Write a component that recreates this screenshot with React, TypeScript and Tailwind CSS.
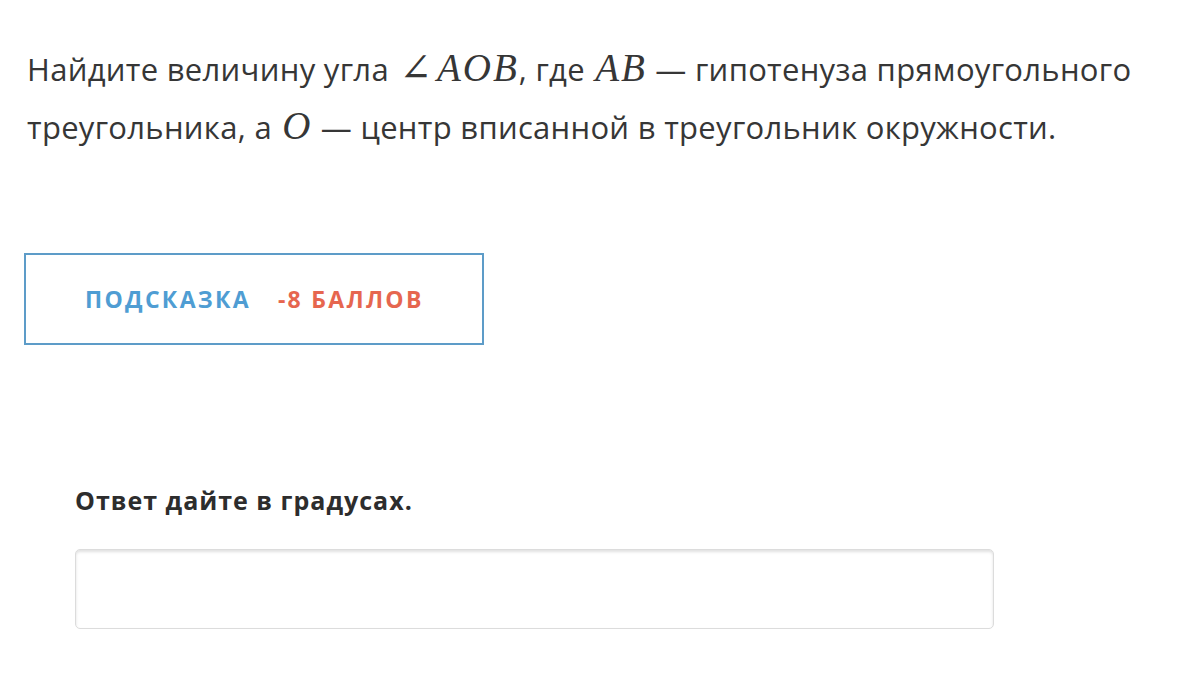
import React from "react";

const M = ({ children }: { children: React.ReactNode }) => (
  <span className="italic text-[39px] leading-none tracking-[2px] pl-[2px] [font-family:'Liberation_Serif','DejaVu_Serif',serif]">{children}</span>
);

export default function App() {
  return (
    <div className="w-[1181px] h-[692px] bg-white text-[#363636] [font-family:'Open_Sans','Noto_Sans',sans-serif] overflow-hidden">
      <div className="pl-[27px] pr-[20px] pt-[40px]">
        <p className="text-[31px] leading-[58px] tracking-[0.3px]">
          Найдите величину угла <M><span className="not-italic pr-[3px]">∠</span>AOB</M>, где <M>AB</M> — гипотенуза прямоугольного треугольника, а <M>O</M> — центр вписанной в треугольник окружности.
        </p>
      </div>
      <div className="pl-[24px] mt-[97px]">
        <div className="w-[460px] h-[92px] border-2 border-[#5d9cc8] flex items-center pl-[59px] gap-[27px] text-[23px] tracking-[2.3px] font-bold">
          <span className="text-[#4f9dd3]">ПОДСКАЗКА</span>
          <span className="text-[#e6664f]">-8 БАЛЛОВ</span>
        </div>
      </div>
      <div className="pl-[75px] mt-[140px]">
        <div className="text-[25px] font-bold text-[#2d2d2d] leading-[30px] tracking-[1px]">Ответ дайте в градусах.</div>
        <div className="mt-[34px] w-[919px] h-[80px] rounded-[5px] border border-[#dcdcdc] shadow-[inset_0_2px_3px_rgba(0,0,0,0.12)]" />
      </div>
    </div>
  );
}
